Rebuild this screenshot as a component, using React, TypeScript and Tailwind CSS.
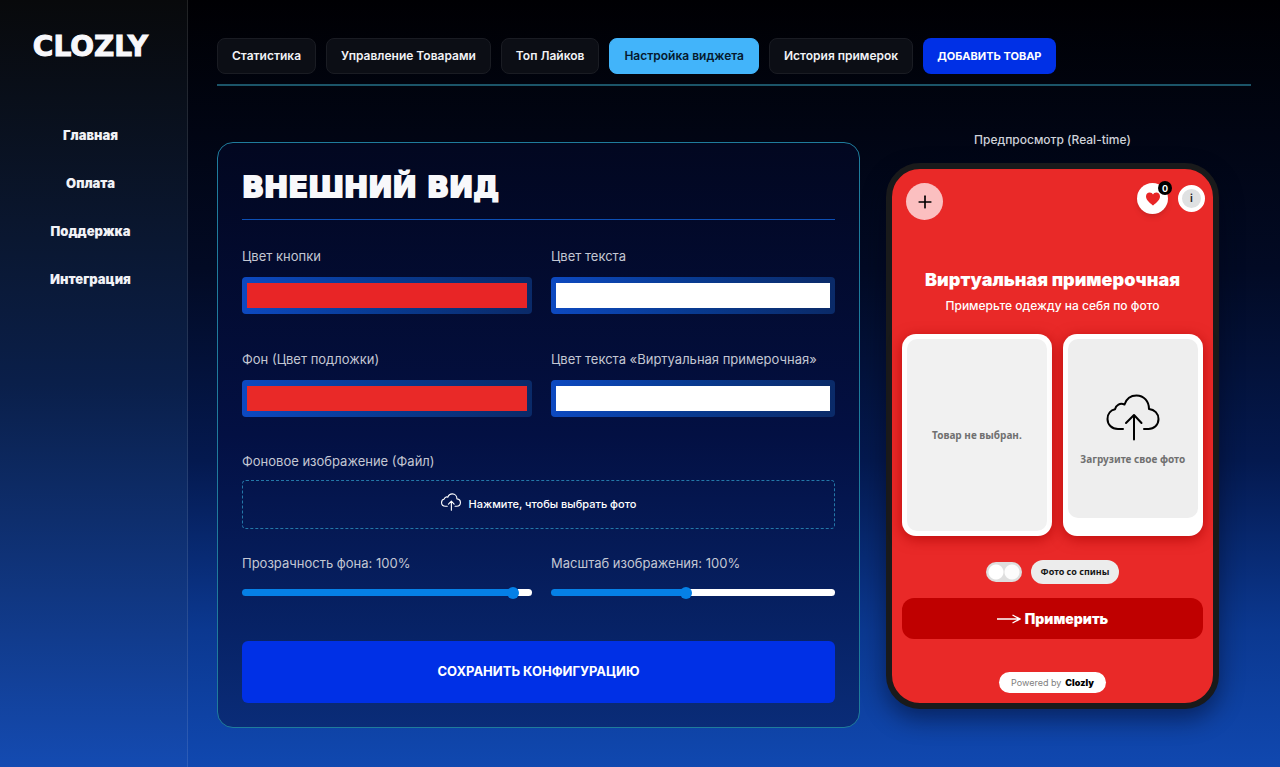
import { useState } from "react";
import { Plus } from "lucide-react";

const navItems = ["Главная", "Оплата", "Поддержка", "Интеграция"];

const tabs = [
  "Статистика",
  "Управление Товарами",
  "Топ Лайков",
  "Настройка виджета",
  "История примерок",
];

const CloudUploadIcon = (props: { className?: string; strokeWidth?: number }) => (
  <svg
    viewBox="0 0 54 47"
    fill="none"
    stroke="currentColor"
    strokeWidth={props.strokeWidth ?? 2}
    strokeLinecap="round"
    strokeLinejoin="round"
    className={props.className}
    aria-hidden="true"
  >
    <path d="M17 35H12C5.500 35 1.500 30.500 1.500 25c0-5.500 3.500-9 7.500-9.800C10 11 14 8.500 18.500 10.500 20.500 4.500 25 1.500 30.500 1.500c7.500 0 12.500 6 12.500 13.500C48.500 15.500 52.500 19.500 52.500 25c0 6-4.500 10-10 10H38" />
    <path d="M28 45.500V21.500M20 29l8-8 7.500 8" />
  </svg>
);

interface IColorField {
  id: string;
  label: string;
  value: string;
  onChange: (value: string) => void;
}

const ColorField = (props: IColorField) => {
  const { id, label, value, onChange } = props;

  return (
    <div className="flex flex-col gap-[11px]">
      <label htmlFor={id} className="text-[13px] leading-5 text-[#c3c7d3]">
        {label}
      </label>
      <input
        id={id}
        type="color"
        value={value}
        onChange={(e) => onChange(e.target.value)}
        className="h-[37px] w-full cursor-pointer appearance-none rounded bg-linear-to-r from-[#0d49c0] via-[#083a90] to-[#0a2a68] px-[5px] py-1.5 [&::-webkit-color-swatch]:rounded-none [&::-webkit-color-swatch]:border-0 [&::-webkit-color-swatch-wrapper]:p-0"
      />
    </div>
  );
};

interface IRangeField {
  id: string;
  label: string;
  min: number;
  max: number;
  value: number;
  onChange: (value: number) => void;
}

const RangeField = (props: IRangeField) => {
  const { id, label, min, max, value, onChange } = props;
  const percent = ((value - min) / (max - min)) * 100;

  return (
    <div className="flex flex-col gap-4">
      <label htmlFor={id} className="text-[13px] leading-5 text-[#c3c7d3]">
        {label}: {value}%
      </label>
      <input
        id={id}
        type="range"
        min={min}
        max={max}
        value={value}
        onChange={(e) => onChange(Number(e.target.value))}
        style={{
          background: `linear-gradient(to right, #0580e6 ${percent}%, #ffffff ${percent}%)`,
        }}
        className="h-[7px] w-full cursor-pointer appearance-none rounded-full [&::-webkit-slider-thumb]:size-3 [&::-webkit-slider-thumb]:appearance-none [&::-webkit-slider-thumb]:rounded-full [&::-webkit-slider-thumb]:bg-[#0580e6]"
      />
    </div>
  );
};

const Sidebar = () => (
  <aside className="flex w-47 shrink-0 flex-col items-center border-r border-white/10 bg-linear-to-b from-[#08090b] via-[#0a1f4a] to-[#144bb2] pt-8 pr-1.5">
    <p className="font-['DejaVu_Sans',sans-serif] text-[28px] leading-[30px] font-bold text-[#f8f8fb] [-webkit-text-stroke:1px_#f8f8fb]">
      CLOZLY
    </p>
    <nav className="mt-[63px] flex flex-col items-center gap-7">
      {navItems.map((item) => (
        <a key={item} href="#" className="text-[13px] leading-5 font-black text-[#f1f2f6]">
          {item}
        </a>
      ))}
    </nav>
  </aside>
);

const TabsBar = () => {
  const [activeTab, setActiveTab] = useState("Настройка виджета");

  return (
    <div className="flex flex-wrap gap-2.5 border-b-2 border-[#1b5468] pb-2.5">
      {tabs.map((tab) => (
        <button
          key={tab}
          type="button"
          onClick={() => setActiveTab(tab)}
          className={`h-9 rounded-lg border px-3.5 text-xs font-semibold ${
            activeTab === tab
              ? "border-[#42b4fa] bg-[#42b4fa] text-[#06192e]"
              : "border-[#1a1c23] bg-[#0c0e15] text-[#f1f2f5]"
          }`}
        >
          {tab}
        </button>
      ))}
      <button
        type="button"
        className="h-9 rounded-lg bg-[#0030e6] px-3.5 text-[11px] font-bold text-white uppercase"
      >
        Добавить товар
      </button>
    </div>
  );
};

interface IPreview {
  textColor: string;
  background: string;
  titleColor: string;
}

const Preview = (props: IPreview) => {
  const { textColor, background, titleColor } = props;
  const [backPhoto, setBackPhoto] = useState(false);

  return (
    <section className="flex w-[333px] shrink-0 flex-col items-center">
      <h2 className="mb-[13px] text-xs leading-5 font-medium text-[#cfd2da]">
        Предпросмотр (Real-time)
      </h2>
      <div
        className="flex w-full flex-col items-center rounded-[34px] border-6 border-[#191a1b] px-2.5 pt-3.5 pb-2.5 shadow-[0_10px_24px_rgba(0,0,20,0.45)]"
        style={{ backgroundColor: background }}
      >
        <div className="flex items-start justify-between self-stretch pl-1">
          <button
            type="button"
            aria-label="Добавить"
            className="flex size-[37px] items-center justify-center rounded-full bg-[#fbbfc0] text-black"
          >
            <Plus className="size-5" strokeWidth={2} />
          </button>
          <div className="-mr-0.5 flex items-center gap-2.5">
            <button
              type="button"
              aria-label="Лайки"
              className="relative flex size-[31px] items-center justify-center rounded-full bg-white shadow-md"
            >
              <svg viewBox="0 0 16 15" className="h-3.5 w-4" fill="#e82526" aria-hidden="true">
                <path d="M8 14.500C6.500 12.800.500 9.500.500 4.800.500 2.200 2.300.500 4.400.500 6.200.500 7.300 1.500 8 2.800 8.700 1.500 9.800.500 11.600.500c2.100 0 3.900 1.700 3.900 4.300C15.500 9.500 9.500 12.800 8 14.500z" />
              </svg>
              <span className="absolute -top-0.5 -right-1 flex size-3.5 items-center justify-center rounded-full bg-black text-[9px] leading-none font-bold text-white">
                0
              </span>
            </button>
            <button
              type="button"
              className="flex size-[27px] items-center justify-center rounded-full border-4 border-white bg-[#dfe1e2] text-[11px] leading-none font-semibold text-[#222]"
            >
              i
            </button>
          </div>
        </div>

        <h3
          className="mt-12 text-lg leading-6 font-black whitespace-nowrap"
          style={{ color: titleColor }}
        >
          Виртуальная примерочная
        </h3>
        <p className="mt-1 text-xs leading-5 font-medium" style={{ color: textColor }}>
          Примерьте одежду на себя по фото
        </p>

        <div className="mt-[18px] flex h-[202px] w-full gap-[11px]">
          <div className="flex flex-[151] rounded-[14px] bg-white p-[5px] shadow-[0_3px_14px_rgba(170,0,0,0.7)]">
            <div className="flex flex-1 items-center justify-center rounded-[10px] bg-[#f1f1f1] font-['Noto_Sans'] text-[10px] font-bold text-[#707070]">
              Товар не выбран.
            </div>
          </div>
          <div className="flex flex-[141] rounded-[14px] bg-white p-[5px] pb-[18px] shadow-[0_3px_14px_rgba(170,0,0,0.7)]">
            <button
              type="button"
              className="flex flex-1 flex-col items-center justify-center rounded-[10px] bg-[#eeeeee] pt-1 text-black"
            >
              <CloudUploadIcon className="h-[47px] w-[54px]" strokeWidth={2} />
              <span className="mt-2.5 font-['Noto_Sans'] text-[10px] leading-4 font-bold whitespace-nowrap text-[#707070]">
                Загрузите свое фото
              </span>
            </button>
          </div>
        </div>

        <div className="mt-6 flex items-center gap-[9px]">
          <input
            id="backPhoto"
            type="checkbox"
            checked={backPhoto}
            onChange={() => setBackPhoto(!backPhoto)}
            className="h-5 w-9 appearance-none rounded-full bg-[#dedede] bg-[radial-gradient(circle_at_10px_10px,#ffffff_7px,transparent_8px),radial-gradient(circle_at_26px_10px,#fcfcfc_7px,transparent_8px)]"
          />
          <label
            htmlFor="backPhoto"
            className="flex h-6 items-center rounded-full bg-[#ececec] px-2.5 font-['Noto_Sans'] text-[9px] font-bold text-[#151515]"
          >
            Фото со спины
          </label>
        </div>

        <button
          type="button"
          className="mt-3.5 flex h-[41px] w-full items-center justify-center gap-1 rounded-xl bg-[#bf0000] text-sm font-black"
          style={{ color: textColor }}
        >
          <svg viewBox="0 0 24 10" className="h-2.5 w-6" fill="none" stroke="currentColor" strokeWidth="1.400" aria-hidden="true">
            <path d="M0 5H23M15.500 1L23 5L15.500 9" />
          </svg>
          Примерить
        </button>

        <a
          href="#"
          className="mt-[33px] flex h-[21px] items-center gap-1 rounded-full bg-white px-3 text-[9px] text-[#808080]"
        >
          Powered by <span className="font-black text-black">Clozly</span>
        </a>
      </div>
    </section>
  );
};

const App = () => {
  const [buttonColor, setButtonColor] = useState("#e82526");
  const [textColor, setTextColor] = useState("#ffffff");
  const [background, setBackground] = useState("#e92928");
  const [titleColor, setTitleColor] = useState("#ffffff");
  const [opacity, setOpacity] = useState(100);
  const [scale, setScale] = useState(100);

  return (
    <div className="flex min-h-screen bg-[linear-gradient(to_bottom,#000003_0%,#020a24_35%,#04194f_60%,#0b3890_82%,#1048b0_100%)] font-['Inter',sans-serif]">
      <Sidebar />
      <main className="min-w-0 flex-1 px-[29px] pt-[38px] pb-10">
        <TabsBar />
        <div className="mt-11 flex items-start gap-[26px] pr-8">
          <form
            onSubmit={(e) => e.preventDefault()}
            className="mt-3 min-w-0 flex-1 rounded-2xl border border-[#1f7c9c] bg-linear-to-b from-[#020720] via-[#031043] to-[#0a2c78] p-6"
          >
            <h1 className="border-b border-[#0d4fb5] pb-3 font-['DejaVu_Sans',sans-serif] text-[29px] leading-10 font-bold text-[#f8f8fb] uppercase [-webkit-text-stroke:2px_#f8f8fb]">
              Внешний вид
            </h1>

            <div className="mt-[26px] grid grid-cols-[290fr_284fr] gap-x-[19px] gap-y-[35px]">
              <ColorField id="buttonColor" label="Цвет кнопки" value={buttonColor} onChange={setButtonColor} />
              <ColorField id="textColor" label="Цвет текста" value={textColor} onChange={setTextColor} />
              <ColorField id="background" label="Фон (Цвет подложки)" value={background} onChange={setBackground} />
              <ColorField
                id="titleColor"
                label="Цвет текста «Виртуальная примерочная»"
                value={titleColor}
                onChange={setTitleColor}
              />
            </div>

            <p className="mt-[34px] text-[13px] leading-5 text-[#c3c7d3]">Фоновое изображение (Файл)</p>
            <label
              htmlFor="backgroundImage"
              className="mt-[9px] flex h-[49px] cursor-pointer items-center justify-center gap-2 rounded border border-dashed border-[#2478a8] text-[11px] font-medium text-white"
            >
              <CloudUploadIcon className="mb-1.5 h-[18px] w-5" strokeWidth={3} />
              Нажмите, чтобы выбрать фото
              <input id="backgroundImage" type="file" accept="image/*" className="sr-only" />
            </label>

            <div className="mt-6 grid grid-cols-[290fr_284fr] gap-x-[19px]">
              <RangeField id="opacity" label="Прозрачность фона" min={0} max={105} value={opacity} onChange={setOpacity} />
              <RangeField id="scale" label="Масштаб изображения" min={10} max={200} value={scale} onChange={setScale} />
            </div>

            <button
              type="submit"
              className="mt-[45px] h-[62px] w-full rounded-md bg-[#0030e6] text-[13px] font-bold text-white uppercase"
            >
              Сохранить конфигурацию
            </button>
          </form>

          <Preview textColor={textColor} background={background} titleColor={titleColor} />
        </div>
      </main>
    </div>
  );
};

export default App;
